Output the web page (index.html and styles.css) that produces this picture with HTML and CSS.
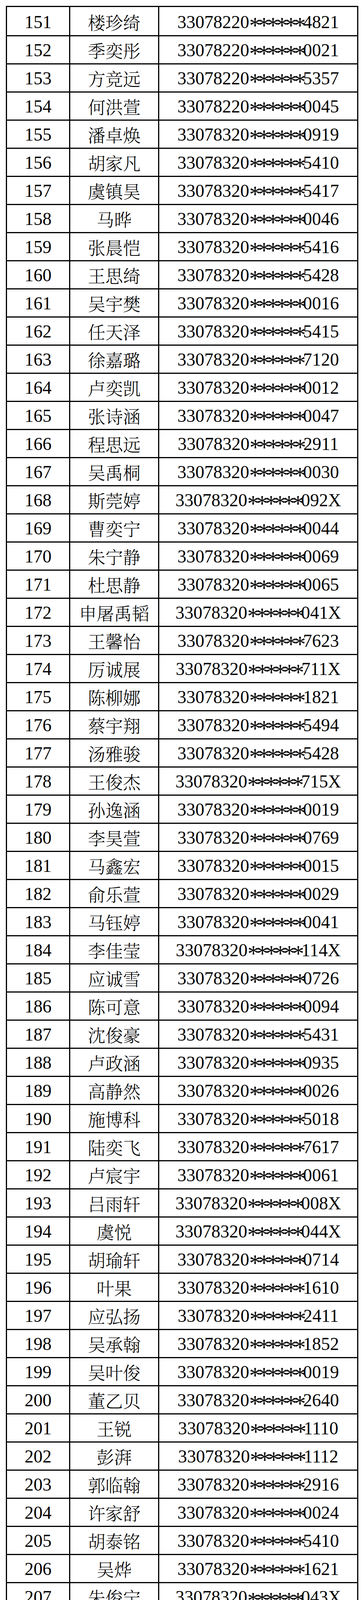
FILE: index.html
```html
<!DOCTYPE html>
<html lang="zh-CN">
<head>
<meta charset="utf-8">
<title>名单</title>
<link rel="stylesheet" href="styles.css">
</head>
<body>
<div class="sheet">
<div class="row"><div class="no">151</div><div class="name">楼珍绮</div><div class="id">33078220<span class="stars">******</span>4821</div></div>
<div class="row"><div class="no">152</div><div class="name">季奕彤</div><div class="id">33078220<span class="stars">******</span>0021</div></div>
<div class="row"><div class="no">153</div><div class="name">方竞远</div><div class="id">33078220<span class="stars">******</span>5357</div></div>
<div class="row"><div class="no">154</div><div class="name">何洪萱</div><div class="id">33078220<span class="stars">******</span>0045</div></div>
<div class="row"><div class="no">155</div><div class="name">潘卓焕</div><div class="id">33078320<span class="stars">******</span>0919</div></div>
<div class="row"><div class="no">156</div><div class="name">胡家凡</div><div class="id">33078320<span class="stars">******</span>5410</div></div>
<div class="row"><div class="no">157</div><div class="name">虞镇昊</div><div class="id">33078320<span class="stars">******</span>5417</div></div>
<div class="row"><div class="no">158</div><div class="name">马晔</div><div class="id">33078320<span class="stars">******</span>0046</div></div>
<div class="row"><div class="no">159</div><div class="name">张晨恺</div><div class="id">33078320<span class="stars">******</span>5416</div></div>
<div class="row"><div class="no">160</div><div class="name">王思绮</div><div class="id">33078320<span class="stars">******</span>5428</div></div>
<div class="row"><div class="no">161</div><div class="name">吴宇樊</div><div class="id">33078320<span class="stars">******</span>0016</div></div>
<div class="row"><div class="no">162</div><div class="name">任天泽</div><div class="id">33078320<span class="stars">******</span>5415</div></div>
<div class="row"><div class="no">163</div><div class="name">徐嘉璐</div><div class="id">33078320<span class="stars">******</span>7120</div></div>
<div class="row"><div class="no">164</div><div class="name">卢奕凯</div><div class="id">33078320<span class="stars">******</span>0012</div></div>
<div class="row"><div class="no">165</div><div class="name">张诗涵</div><div class="id">33078320<span class="stars">******</span>0047</div></div>
<div class="row"><div class="no">166</div><div class="name">程思远</div><div class="id">33078320<span class="stars">******</span>2911</div></div>
<div class="row"><div class="no">167</div><div class="name">吴禹桐</div><div class="id">33078320<span class="stars">******</span>0030</div></div>
<div class="row"><div class="no">168</div><div class="name">斯莞婷</div><div class="id">33078320<span class="stars">******</span>092X</div></div>
<div class="row"><div class="no">169</div><div class="name">曹奕宁</div><div class="id">33078320<span class="stars">******</span>0044</div></div>
<div class="row"><div class="no">170</div><div class="name">朱宁静</div><div class="id">33078320<span class="stars">******</span>0069</div></div>
<div class="row"><div class="no">171</div><div class="name">杜思静</div><div class="id">33078320<span class="stars">******</span>0065</div></div>
<div class="row"><div class="no">172</div><div class="name">申屠禹韬</div><div class="id">33078320<span class="stars">******</span>041X</div></div>
<div class="row"><div class="no">173</div><div class="name">王馨怡</div><div class="id">33078320<span class="stars">******</span>7623</div></div>
<div class="row"><div class="no">174</div><div class="name">厉诚展</div><div class="id">33078320<span class="stars">******</span>711X</div></div>
<div class="row"><div class="no">175</div><div class="name">陈柳娜</div><div class="id">33078320<span class="stars">******</span>1821</div></div>
<div class="row"><div class="no">176</div><div class="name">蔡宇翔</div><div class="id">33078320<span class="stars">******</span>5494</div></div>
<div class="row"><div class="no">177</div><div class="name">汤雅骏</div><div class="id">33078320<span class="stars">******</span>5428</div></div>
<div class="row"><div class="no">178</div><div class="name">王俊杰</div><div class="id">33078320<span class="stars">******</span>715X</div></div>
<div class="row"><div class="no">179</div><div class="name">孙逸涵</div><div class="id">33078320<span class="stars">******</span>0019</div></div>
<div class="row"><div class="no">180</div><div class="name">李昊萱</div><div class="id">33078320<span class="stars">******</span>0769</div></div>
<div class="row"><div class="no">181</div><div class="name">马鑫宏</div><div class="id">33078320<span class="stars">******</span>0015</div></div>
<div class="row"><div class="no">182</div><div class="name">俞乐萱</div><div class="id">33078320<span class="stars">******</span>0029</div></div>
<div class="row"><div class="no">183</div><div class="name">马钰婷</div><div class="id">33078320<span class="stars">******</span>0041</div></div>
<div class="row"><div class="no">184</div><div class="name">李佳莹</div><div class="id">33078320<span class="stars">******</span>114X</div></div>
<div class="row"><div class="no">185</div><div class="name">应诚雪</div><div class="id">33078320<span class="stars">******</span>0726</div></div>
<div class="row"><div class="no">186</div><div class="name">陈可意</div><div class="id">33078320<span class="stars">******</span>0094</div></div>
<div class="row"><div class="no">187</div><div class="name">沈俊豪</div><div class="id">33078320<span class="stars">******</span>5431</div></div>
<div class="row"><div class="no">188</div><div class="name">卢政涵</div><div class="id">33078320<span class="stars">******</span>0935</div></div>
<div class="row"><div class="no">189</div><div class="name">高静然</div><div class="id">33078320<span class="stars">******</span>0026</div></div>
<div class="row"><div class="no">190</div><div class="name">施博科</div><div class="id">33078320<span class="stars">******</span>5018</div></div>
<div class="row"><div class="no">191</div><div class="name">陆奕飞</div><div class="id">33078320<span class="stars">******</span>7617</div></div>
<div class="row"><div class="no">192</div><div class="name">卢宸宇</div><div class="id">33078320<span class="stars">******</span>0061</div></div>
<div class="row"><div class="no">193</div><div class="name">吕雨轩</div><div class="id">33078320<span class="stars">******</span>008X</div></div>
<div class="row"><div class="no">194</div><div class="name">虞悦</div><div class="id">33078320<span class="stars">******</span>044X</div></div>
<div class="row"><div class="no">195</div><div class="name">胡瑜轩</div><div class="id">33078320<span class="stars">******</span>0714</div></div>
<div class="row"><div class="no">196</div><div class="name">叶果</div><div class="id">33078320<span class="stars">******</span>1610</div></div>
<div class="row"><div class="no">197</div><div class="name">应弘扬</div><div class="id">33078320<span class="stars">******</span>2411</div></div>
<div class="row"><div class="no">198</div><div class="name">吴承翰</div><div class="id">33078320<span class="stars">******</span>1852</div></div>
<div class="row"><div class="no">199</div><div class="name">吴叶俊</div><div class="id">33078320<span class="stars">******</span>0019</div></div>
<div class="row"><div class="no">200</div><div class="name">董乙贝</div><div class="id">33078320<span class="stars">******</span>2640</div></div>
<div class="row"><div class="no">201</div><div class="name">王锐</div><div class="id">33078320<span class="stars">******</span>1110</div></div>
<div class="row"><div class="no">202</div><div class="name">彭湃</div><div class="id">33078320<span class="stars">******</span>1112</div></div>
<div class="row"><div class="no">203</div><div class="name">郭临翰</div><div class="id">33078320<span class="stars">******</span>2916</div></div>
<div class="row"><div class="no">204</div><div class="name">许家舒</div><div class="id">33078320<span class="stars">******</span>0024</div></div>
<div class="row"><div class="no">205</div><div class="name">胡泰铭</div><div class="id">33078320<span class="stars">******</span>5410</div></div>
<div class="row"><div class="no">206</div><div class="name">吴烨</div><div class="id">33078320<span class="stars">******</span>1621</div></div>
<div class="row"><div class="no">207</div><div class="name">朱俊宁</div><div class="id">33078320<span class="stars">******</span>043X</div></div>
<div class="row"><div class="no">208</div><div class="name">郭心蕊</div><div class="id">33078320<span class="stars">******</span>5446</div></div>
<div class="row"><div class="no">209</div><div class="name">张芷萌</div><div class="id">33078320<span class="stars">******</span>0021</div></div>
<div class="row"><div class="no">210</div><div class="name">俞北辰</div><div class="id">33078320<span class="stars">******</span>5443</div></div>
<div class="row"><div class="no">211</div><div class="name">徐语曈</div><div class="id">33078320<span class="stars">******</span>1624</div></div>
<div class="row"><div class="no">212</div><div class="name">黄景宽</div><div class="id">33078320<span class="stars">******</span>0010</div></div>
<div class="row"><div class="no">213</div><div class="name">吕楚晗</div><div class="id">33078320<span class="stars">******</span>0712</div></div>
<div class="row"><div class="no">214</div><div class="name">吴晨皓</div><div class="id">33078320<span class="stars">******</span>0035</div></div>
<div class="row"><div class="no">215</div><div class="name">卢轶涛</div><div class="id">33078320<span class="stars">******</span>0013</div></div>
<div class="row"><div class="no">216</div><div class="name">张佳琳</div><div class="id">33078320<span class="stars">******</span>5448</div></div>
<div class="row"><div class="no">217</div><div class="name">张嘉宸</div><div class="id">33078320<span class="stars">******</span>2446</div></div>
<div class="row"><div class="no">218</div><div class="name">聂舒雅</div><div class="id">33078320<span class="stars">******</span>5420</div></div>
<div class="row"><div class="no">219</div><div class="name">王媛仪</div><div class="id">33078320<span class="stars">******</span>1642</div></div>
<div class="row"><div class="no">220</div><div class="name">张千澍</div><div class="id">33078320<span class="stars">******</span>0053</div></div>
</div>
</body>
</html>
```
FILE: styles.css
```css
html, body {
  margin: 0;
  padding: 0;
  background: #ffffff;
}

body {
  color: #000000;
  font-family: "Liberation Serif", "Noto Serif CJK SC", "Noto Sans CJK SC", serif;
}

.sheet {
  display: flex;
  flex-direction: column;
  width: 900px;
  margin: 15px 0 0 15px;
  border-top: 3px solid #000;
  border-left: 3px solid #000;
}

.row {
  display: grid;
  grid-template-columns: 162px 228px 510px;
  height: 72px;
  flex: none;
}

.row > div {
  box-sizing: border-box;
  border-right: 3px solid #000;
  border-bottom: 3px solid #000;
  padding-top: 6px;
  text-align: center;
  white-space: nowrap;
  line-height: 66px;
}

.no,
.id {
  font-family: "Liberation Serif", serif;
  font-size: 46px;
}

.stars {
  font-size: 60px;
  letter-spacing: -7px;
  line-height: 40px;
  vertical-align: -13px;
}

.name {
  font-family: "Noto Serif CJK SC", "Noto Sans CJK SC", sans-serif;
  font-size: 45px;
  font-weight: 300;
}
```
